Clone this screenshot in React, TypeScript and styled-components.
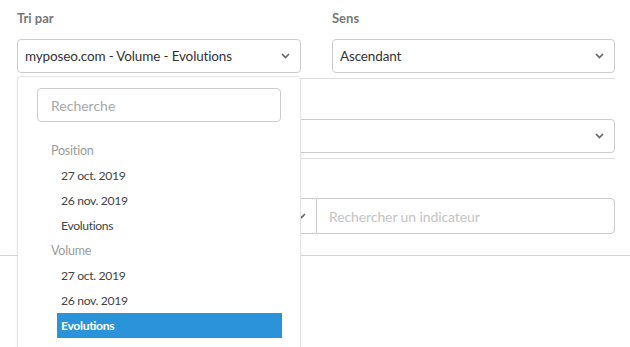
import React from "react";
import styled, { createGlobalStyle } from "styled-components";

const Global = createGlobalStyle`
  html, body { margin: 0; padding: 0; background: #fff; }
  body { font-family: "Lato", "Open Sans", sans-serif; color: #333; }
  * { box-sizing: border-box; }
`;

const Page = styled.div`
  position: relative;
  width: 630px;
  height: 347px;
  overflow: hidden;
`;

const Content = styled.div`
  padding: 0 15px 0 17px;
`;

const Row = styled.div<{ $pt: number; $h: number }>`
  display: grid;
  grid-template-columns: 284px 283px;
  column-gap: 31px;
  padding-top: ${(p) => p.$pt}px;
  height: ${(p) => p.$h}px;
  border-bottom: 1px solid #dcdcdc;
`;

const Field = styled.div`
  display: flex;
  flex-direction: column;
`;

const Label = styled.div`
  font-size: 13px;
  font-weight: 700;
  color: #777;
  height: 29px;
  line-height: 17px;
`;

const Select = styled.div<{ $full?: boolean }>`
  height: 34px;
  border: 1px solid #ccc;
  border-radius: 4px;
  display: flex;
  align-items: center;
  justify-content: space-between;
  padding: 0 10px 1px 7px;
  font-size: 13.5px;
  letter-spacing: -0.15px;
  color: #333;
  grid-column: ${(p) => (p.$full ? "1 / -1" : "auto")};
`;

const SplitRow = styled.div`
  display: flex;
  height: 36px;
  margin-top: 39px;
`;

const LeftSelect = styled.div`
  width: 299px;
  border: 1px solid #ccc;
  border-right: none;
  border-radius: 4px 0 0 4px;
  display: flex;
  align-items: center;
  justify-content: flex-end;
  padding-right: 10px;
`;

const SearchInput = styled.div`
  flex: 1;
  border: 1px solid #ccc;
  border-radius: 0 4px 4px 0;
  display: flex;
  align-items: center;
  padding-left: 12px;
  font-size: 14px;
  letter-spacing: -0.1px;
  color: #c4c4c4;
`;

const FullLine = styled.div`
  margin-top: 21px;
  height: 1px;
  background: #d4d4d4;
`;

const Menu = styled.div`
  position: absolute;
  left: 17px;
  top: 76px;
  width: 284px;
  height: 290px;
  background: #fff;
  border: 1px solid #e4e4e4;
  border-radius: 4px;
  box-shadow: 0 1px 3px rgba(0, 0, 0, 0.06);
  padding: 11px 19px 0 19px;
`;

const MenuSearch = styled.div`
  height: 34px;
  border: 1px solid #ccc;
  border-radius: 4px;
  display: flex;
  align-items: center;
  padding-left: 13px;
  font-size: 14px;
  color: #a8a8a8;
`;

const List = styled.div`
  margin-top: 16px;
  display: flex;
  flex-direction: column;
`;

const GroupHeading = styled.div`
  height: 25px;
  line-height: 25px;
  padding-left: 14px;
  font-size: 12.5px;
  letter-spacing: -0.2px;
  color: #9a9a9a;
`;

const Item = styled.div<{ $active?: boolean }>`
  height: 25px;
  line-height: 25px;
  margin-left: 20px;
  margin-right: -1px;
  padding-left: 4px;
  font-size: 12.2px;
  letter-spacing: -0.35px;
  color: ${(p) => (p.$active ? "#fff" : "#444")};
  background: ${(p) => (p.$active ? "#2a93d9" : "transparent")};
  font-weight: ${(p) => (p.$active ? 700 : 400)};
`;

const Chevron = () => (
  <svg width="9" height="6" viewBox="0 0 9 6">
    <path d="M1 1 L4.5 4.5 L8 1" fill="none" stroke="#666" strokeWidth="1.7" />
  </svg>
);

const groups = [
  { name: "Position", items: ["27 oct. 2019", "26 nov. 2019", "Evolutions"] },
  { name: "Volume", items: ["27 oct. 2019", "26 nov. 2019", "Evolutions"] },
];

export default function App() {
  return (
    <>
      <Global />
      <Page>
        <Content>
          <Row $pt={10} $h={79}>
            <Field>
              <Label>Tri par</Label>
              <Select>
                <span>myposeo.com - Volume - Evolutions</span>
                <Chevron />
              </Select>
            </Field>
            <Field>
              <Label>Sens</Label>
              <Select>
                <span>Ascendant</span>
                <Chevron />
              </Select>
            </Field>
          </Row>
          <Row $pt={40} $h={80}>
            <Select $full>
              <span />
              <Chevron />
            </Select>
          </Row>
        </Content>
        <Content>
          <SplitRow>
            <LeftSelect>
              <Chevron />
            </LeftSelect>
            <SearchInput>Rechercher un indicateur</SearchInput>
          </SplitRow>
        </Content>
        <FullLine />
        <Menu>
          <MenuSearch>Recherche</MenuSearch>
          <List>
            {groups.map((g) => (
              <React.Fragment key={g.name}>
                <GroupHeading>{g.name}</GroupHeading>
                {g.items.map((it, i) => (
                  <Item key={it} $active={g.name === "Volume" && i === 2}>
                    {it}
                  </Item>
                ))}
              </React.Fragment>
            ))}
          </List>
        </Menu>
      </Page>
    </>
  );
}
